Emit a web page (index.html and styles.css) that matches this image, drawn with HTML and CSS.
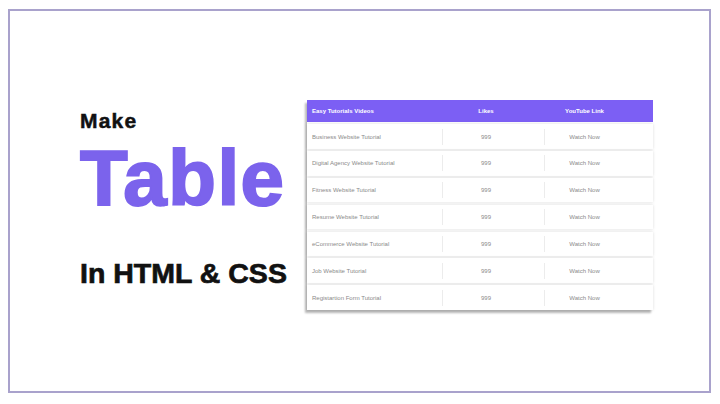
FILE: index.html
```html
<!DOCTYPE html>
<html lang="en">
<head>
<meta charset="utf-8">
<title>Make Table In HTML &amp; CSS</title>
<link rel="stylesheet" href="styles.css">
</head>
<body>
<div class="frame">
  <div class="intro">
    <div class="make">Make</div>
    <div class="title">Table</div>
    <div class="sub">In HTML &amp; CSS</div>
  </div>
  <div class="table">
    <div class="row head">
      <div class="cell c1">Easy Tutorials Videos</div>
      <div class="cell c2">Likes</div>
      <div class="cell c3">YouTube Link</div>
    </div>
    <div class="row">
      <div class="cell c1">Business Website Tutorial</div>
      <div class="cell c2">999</div>
      <div class="cell c3">Watch Now</div>
    </div>
    <div class="row">
      <div class="cell c1">Digital Agency Website Tutorial</div>
      <div class="cell c2">999</div>
      <div class="cell c3">Watch Now</div>
    </div>
    <div class="row">
      <div class="cell c1">Fitness Website Tutorial</div>
      <div class="cell c2">999</div>
      <div class="cell c3">Watch Now</div>
    </div>
    <div class="row">
      <div class="cell c1">Resume Website Tutorial</div>
      <div class="cell c2">999</div>
      <div class="cell c3">Watch Now</div>
    </div>
    <div class="row">
      <div class="cell c1">eCommerce Website Tutorial</div>
      <div class="cell c2">999</div>
      <div class="cell c3">Watch Now</div>
    </div>
    <div class="row">
      <div class="cell c1">Job Website Tutorial</div>
      <div class="cell c2">999</div>
      <div class="cell c3">Watch Now</div>
    </div>
    <div class="row">
      <div class="cell c1">Registartion Form Tutorial</div>
      <div class="cell c2">999</div>
      <div class="cell c3">Watch Now</div>
    </div>
  </div>
</div>
</body>
</html>
```
FILE: styles.css
```css
* { box-sizing: border-box; }
html, body { margin: 0; padding: 0; background: #ffffff; }
body {
  font-family: "Liberation Sans", Arial, sans-serif;
  width: 720px;
  height: 404px;
  overflow: hidden;
}
.frame {
  margin: 9px 0 0 8px;
  width: 703px;
  height: 384px;
  border: 2px solid #a9a2cc;
  display: flex;
  align-items: flex-start;
  padding-left: 70px;
}
.intro {
  flex: none;
  width: 227px;
  margin-top: 99px;
  font-weight: 700;
  color: #111;
}
.make {
  font-size: 21px;
  line-height: 21px;
  letter-spacing: 1.2px;
  -webkit-text-stroke: 0.5px #111;
}
.title {
  margin-top: 8px;
  font-size: 78px;
  line-height: 78px;
  letter-spacing: 1.5px;
  color: #7b63ec;
  -webkit-text-stroke: 2px #7b63ec;
}
.sub {
  margin-top: 42px;
  font-size: 28.5px;
  line-height: 28.5px;
  -webkit-text-stroke: 0.7px #111;
}
.table {
  flex: none;
  width: 346px;
  margin-top: 89px;
  display: flex;
  flex-direction: column;
  gap: 2.33px;
  background: #ffffff;
  box-shadow: -2px 3px 2px rgba(0, 0, 0, 0.28);
}
.row {
  display: grid;
  grid-template-columns: 135px 102px 109px;
  height: 24.5px;
  background: #ffffff;
  box-shadow: 0 0 3px rgba(0, 0, 0, 0.14);
  font-size: 6px;
  color: #8a8a8a;
}
.row.head {
  height: 22px;
  background: #7c5ff4;
  color: #ffffff;
  font-weight: 700;
  box-shadow: none;
}
.cell {
  display: flex;
  align-items: center;
  white-space: nowrap;
}
.c1 { padding-left: 5px; }
.c2 { justify-content: center; padding-right: 14px; }
.c3 { justify-content: center; padding-right: 28px; }
.row:not(.head) .c2,
.row:not(.head) .c3 {
  border-left: 1px solid #ececec;
  align-self: center;
  height: 16px;
}
.row:not(.head) .c2 { padding-right: 15px; }
.row:not(.head) .c3 { padding-right: 29px; }
```
